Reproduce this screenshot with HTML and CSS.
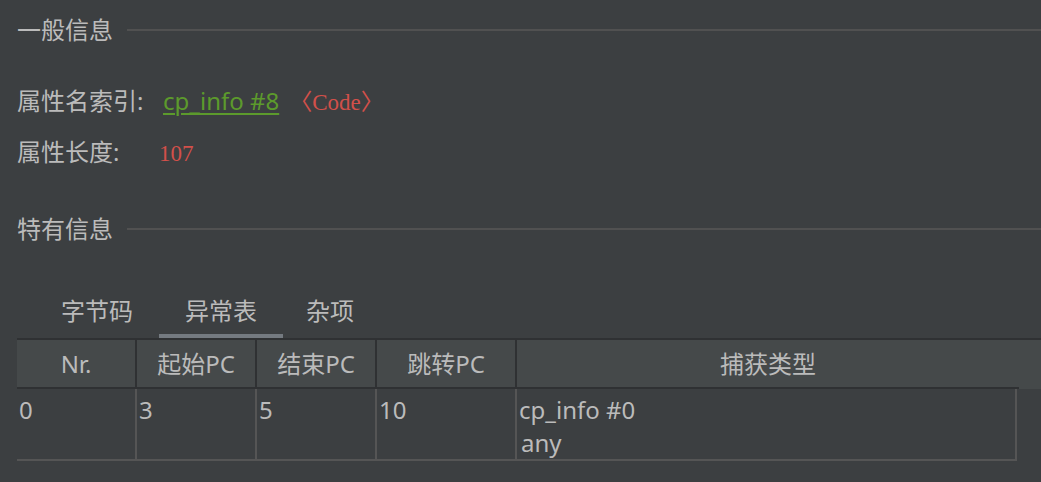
FILE: index.html
```html
<!DOCTYPE html>
<html lang="zh">
<head>
<meta charset="utf-8">
<title>Code</title>
<link rel="stylesheet" href="styles.css">
</head>
<body>
<div class="page">
  <div class="section-title"><span>一般信息</span><div class="rule"></div></div>
  <div class="fields">
    <div class="field">
      <span class="label">属性名索引:</span>
      <span class="value"><a class="link">cp_info #8</a><span class="tag">〈Code〉</span></span>
    </div>
    <div class="field">
      <span class="label">属性长度:</span>
      <span class="value"><span class="num">107</span></span>
    </div>
  </div>
  <div class="section-title second"><span>特有信息</span><div class="rule"></div></div>
  <div class="tabs">
    <div class="tab">字节码</div>
    <div class="tab active">异常表</div>
    <div class="tab last">杂项</div>
  </div>
  <div class="table">
    <div class="thead">
      <div class="th c1">Nr.</div>
      <div class="th c2">起始PC</div>
      <div class="th c3">结束PC</div>
      <div class="th c4">跳转PC</div>
      <div class="th c5">捕获类型</div>
      <div class="th-fill"></div>
    </div>
    <div class="tbody">
      <div class="td c1">0</div>
      <div class="td c2">3</div>
      <div class="td c3">5</div>
      <div class="td c4">10</div>
      <div class="td c5b"><div>cp_info #0</div><div class="sub">any</div></div>
    </div>
  </div>
</div>
</body>
</html>
```

FILE: styles.css
```css
html, body {
  margin: 0;
  padding: 0;
  background: #3c3f41;
}
body {
  font-family: "Noto Sans", "Noto Sans CJK SC", sans-serif;
  font-size: 24px;
  color: #bbbbbb;
  width: 1041px;
  height: 482px;
  overflow: hidden;
}
.page {
  padding: 13px 0 0 17px;
}
.section-title {
  display: flex;
  align-items: center;
  gap: 14px;
  height: 34px;
  line-height: 34px;
}
.section-title .rule {
  flex: 1;
  height: 2px;
  background: #515151;
  margin-top: -1px;
}
.section-title.second {
  margin-top: 43px;
}
.fields {
  margin-top: 37px;
  display: flex;
  flex-direction: column;
  gap: 17px;
}
.field {
  display: flex;
  height: 34px;
  line-height: 34px;
  align-items: baseline;
}
.label {
  width: 142px;
  flex: none;
}
.link {
  margin-left: 4px;
  color: #5c9a2c;
  text-decoration: underline;
  text-decoration-thickness: 2px;
  text-underline-offset: 3px;
}
.tag {
  margin-left: 10px;
  font-family: "Liberation Serif", "Noto Sans CJK SC", serif;
  font-size: 23px;
  color: #d2504a;
}
.num {
  font-family: "Liberation Serif", serif;
  font-size: 23px;
  color: #d2504a;
}
.tabs {
  display: flex;
  margin-top: 44px;
  margin-left: 18px;
}
.tab {
  padding: 0 26px 2px;
  line-height: 42px;
  border-bottom: 4px solid transparent;
}
.tab.last {
  padding-left: 23px;
}
.tab.active {
  border-bottom-color: #747a80;
}
.table {
  border-top: 2px solid #2f3133;
}
.thead {
  display: flex;
  height: 49px;
  background: #45494a;
}
.th {
  box-sizing: border-box;
  text-align: center;
  line-height: 47px;
  border-bottom: 2px solid #2f3133;
  border-right: 2px solid #2f3133;
}
.th.c5 {
  border-right: none;
  width: 502px;
}
.th-fill {
  flex: 1;
}
.c1, .c2, .c3 { width: 120px; }
.c4 { width: 140px; }
.tbody {
  display: flex;
}
.td, .c5b {
  box-sizing: border-box;
  height: 72px;
  padding: 4px 0 0 2px;
  line-height: 33px;
  border-right: 2px solid #555555;
  border-bottom: 2px solid #555555;
}
.c5b {
  width: 500px;
}
.sub {
  padding-left: 2px;
}
```
